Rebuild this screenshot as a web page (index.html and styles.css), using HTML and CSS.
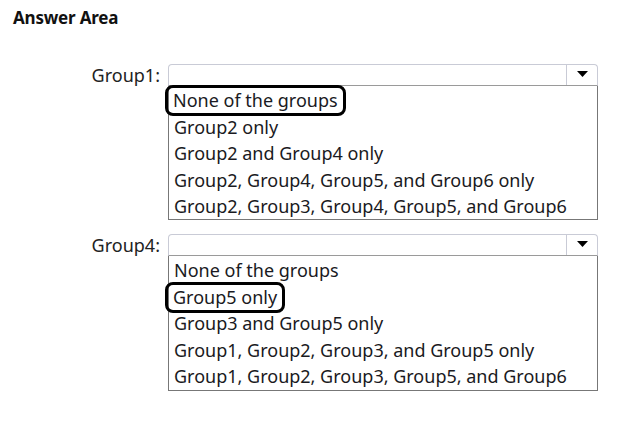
FILE: index.html
```html
<!DOCTYPE html>
<html>
<head>
<meta charset="utf-8">
<link rel="stylesheet" href="styles.css">
</head>
<body>
<div class="page">
  <h1 class="title">Answer Area</h1>
  <div class="field">
    <div class="label">Group1:</div>
    <div class="control">
      <div class="select"><span class="arrow"><svg width="11" height="6" viewBox="0 0 11 6"><path d="M0 0H11L5.5 6Z" fill="#000"/></svg></span></div>
      <ul class="list">
        <li><span class="mark">None of the groups</span></li>
        <li>Group2 only</li>
        <li>Group2 and Group4 only</li>
        <li>Group2, Group4, Group5, and Group6 only</li>
        <li>Group2, Group3, Group4, Group5, and Group6</li>
      </ul>
    </div>
  </div>
  <div class="field">
    <div class="label">Group4:</div>
    <div class="control">
      <div class="select"><span class="arrow"><svg width="11" height="6" viewBox="0 0 11 6"><path d="M0 0H11L5.5 6Z" fill="#000"/></svg></span></div>
      <ul class="list list-b">
        <li>None of the groups</li>
        <li><span class="mark">Group5 only</span></li>
        <li>Group3 and Group5 only</li>
        <li>Group1, Group2, Group3, and Group5 only</li>
        <li>Group1, Group2, Group3, Group5, and Group6</li>
      </ul>
    </div>
  </div>
</div>
</body>
</html>
```

FILE: styles.css
```css
html, body {
  margin: 0;
  padding: 0;
  background: #fff;
}
body {
  width: 624px;
  height: 426px;
  overflow: hidden;
  font-family: "Noto Sans", "Open Sans", sans-serif;
  color: #1a1a22;
}
.page {
  padding: 7px 0 0 13px;
}
.title {
  margin: 0 0 35px 0;
  font-size: 17px;
  font-weight: 700;
  line-height: 22px;
  color: #111;
  letter-spacing: -0.2px;
}
.field {
  display: grid;
  grid-template-columns: 147px 430px;
  column-gap: 8px;
  margin-bottom: 14px;
}
.label {
  text-align: right;
  font-size: 18px;
  line-height: 22px;
  color: #222;
}
.control {
  display: flex;
  flex-direction: column;
}
.select {
  height: 20px;
  border: 1px solid #c9cbd6;
  border-bottom: 1px solid #9a9a9a;
  border-radius: 4px 4px 0 0;
  display: flex;
  justify-content: flex-end;
  background: #fff;
}
.arrow {
  width: 30px;
  border-left: 1px solid #c9cbd6;
  display: flex;
  align-items: center;
  justify-content: center;
  padding-bottom: 2px;
}
.list {
  list-style: none;
  margin: 0;
  padding: 1px 0 0 0;
  border: 1px solid #777;
  border-top: none;
  height: 134px;
  box-sizing: border-box;
}
.list-b {
  height: 135px;
}
.list li {
  font-size: 18px;
  line-height: 26.6px;
  padding-left: 5px;
  white-space: nowrap;
}
.mark {
  display: inline-block;
  border: 3px solid #000;
  border-radius: 8px;
  padding: 0 5px 0 5px;
  margin: -3px 0 -3px -9px;
  line-height: 25px;
}
```
